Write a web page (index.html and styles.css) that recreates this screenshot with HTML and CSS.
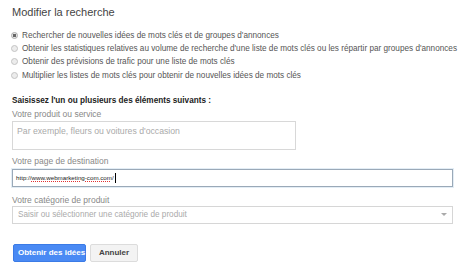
FILE: index.html
```html
<!DOCTYPE html>
<html lang="fr">
<head>
    <meta charset="UTF-8">
    <meta name="viewport" content="width=device-width, initial-scale=1">
    <title>Modifier la recherche</title>
    <link rel="stylesheet" href="styles.css">
</head>
<body>
    <div class="panel">
        <h1>Modifier la recherche</h1>
        <ul class="options">
            <li><span class="radio checked"></span>Rechercher de nouvelles idées de mots clés et de groupes d'annonces</li>
            <li><span class="radio"></span>Obtenir les statistiques relatives au volume de recherche d'une liste de mots clés ou les répartir par groupes d'annonces</li>
            <li><span class="radio"></span>Obtenir des prévisions de trafic pour une liste de mots clés</li>
            <li><span class="radio"></span>Multiplier les listes de mots clés pour obtenir de nouvelles idées de mots clés</li>
        </ul>

        <h2>Saisissez l'un ou plusieurs des éléments suivants :</h2>

        <label class="label">Votre produit ou service</label>
        <div class="textarea">Par exemple, fleurs ou voitures d'occasion</div>

        <label class="label">Votre page de destination</label>
        <div class="input">http://<span class="typo">www.webmarketing-com.com</span>/<span class="caret"></span></div>

        <label class="label">Votre catégorie de produit</label>
        <div class="select">
            <span>Saisir ou sélectionner une catégorie de produit</span>
            <span class="arrow"></span>
        </div>

        <div class="actions">
            <button class="btn primary">Obtenir des idées</button>
            <button class="btn">Annuler</button>
        </div>
    </div>
</body>
</html>
```

FILE: styles.css
```css
* {
    margin: 0;
    padding: 0;
    box-sizing: border-box;
}

html {
    font-family: Arial, "Liberation Sans", sans-serif;
    font-size: 8.5px;
}

body {
    background-color: #fff;
    color: #555;
}

.panel {
    padding: 5px 7px 0 12px;
}

h1 {
    font-size: 11px;
    font-weight: normal;
    color: #444;
    line-height: 14px;
    margin-bottom: 9.5px;
}

.options {
    list-style: none;
    margin-left: -1px;
}

.options li {
    display: flex;
    align-items: center;
    height: 13.4px;
    white-space: nowrap;
    font-size: 8.2px;
    color: #555;
}

.radio {
    width: 7px;
    height: 7px;
    border-radius: 50%;
    border: 1px solid #c4c4c4;
    background-color: #ececec;
    margin-right: 4px;
    flex-shrink: 0;
}

.radio.checked {
    background: radial-gradient(circle, #666 0, #666 1.5px, #e6e6e6 2px);
    border-color: #aaa;
}

h2 {
    font-size: 8.2px;
    color: #222;
    font-weight: bold;
    margin-top: 13px;
    line-height: 11px;
}

.label {
    display: block;
    color: #888;
    line-height: 12px;
    margin-top: 1.5px;
}

.textarea {
    width: 284px;
    height: 29px;
    border: 1px solid #d8d8d8;
    padding: 4px 4px;
    font-size: 8.7px;
    color: #aaa;
    margin-top: 1px;
    margin-bottom: 5px;
}

.input {
    width: 441px;
    height: 18px;
    border: 1px solid #9aa9b8;
    box-shadow: 0 0 0 1px #e3edf5;
    padding: 3px 3px;
    font-size: 6.2px;
    color: #222;
    margin-top: 2px;
    margin-bottom: 7px;
    display: flex;
    align-items: center;
}

.typo {
    text-decoration: underline dotted #e03030;
    text-decoration-thickness: 1px;
}

.caret {
    display: inline-block;
    width: 1px;
    height: 10px;
    background-color: #000;
    margin-left: 1px;
}

.select {
    width: 441px;
    height: 18px;
    border: 1px solid #d6d6d6;
    padding: 0 5px 0 5px;
    font-size: 8.2px;
    color: #aaa;
    display: flex;
    align-items: center;
    justify-content: space-between;
}

.arrow {
    width: 0;
    height: 0;
    border-left: 3px solid transparent;
    border-right: 3px solid transparent;
    border-top: 3px solid #aaa;
}

.actions {
    display: flex;
    gap: 4px;
    margin-top: 20px;
    padding-left: 1px;
}

.btn {
    font-family: Arial, "Liberation Sans", sans-serif;
    font-size: 8px;
    font-weight: bold;
    white-space: nowrap;
    height: 18px;
    padding: 0 4px;
    border: 1px solid #dcdcdc;
    border-radius: 2px;
    background-color: #f3f3f3;
    color: #444;
}

.btn.primary {
    width: 73px;
    background-color: #4a8af4;
    border-color: #3b7be6;
    color: #fff;
}

.btn:not(.primary) {
    width: 48px;
}
```
